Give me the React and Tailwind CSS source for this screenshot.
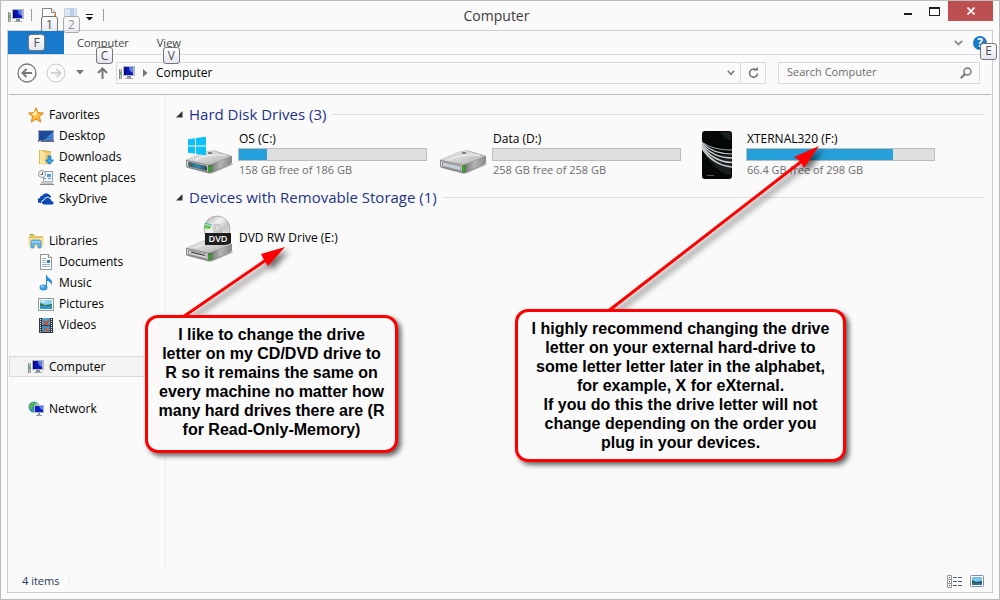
import { useState } from "react";

const sidebarGroups = [
  {
    name: "Favorites",
    icon: StarIcon,
    items: [
      { name: "Desktop", icon: DesktopIcon },
      { name: "Downloads", icon: DownloadsIcon },
      { name: "Recent places", icon: RecentIcon },
      { name: "SkyDrive", icon: CloudIcon },
    ],
  },
  {
    name: "Libraries",
    icon: LibrariesIcon,
    items: [
      { name: "Documents", icon: DocumentIcon },
      { name: "Music", icon: MusicIcon },
      { name: "Pictures", icon: PictureIcon },
      { name: "Videos", icon: VideoIcon },
    ],
  },
  { name: "Computer", icon: ComputerIcon, items: [], active: true },
  { name: "Network", icon: NetworkIcon, items: [] },
];

const drives = [
  { name: "OS (C:)", free: "158 GB free of 186 GB", used: 15, icon: OsDriveIcon },
  { name: "Data (D:)", free: "258 GB free of 258 GB", used: 0, icon: DriveIcon },
  { name: "XTERNAL320 (F:)", free: "66.4 GB free of 298 GB", used: 78, icon: ExternalIcon },
];

/* ---------- icons ---------- */

function ComputerIcon() {
  return (
    <svg width="16" height="16" viewBox="0 0 16 16" className="shrink-0">
      <rect x="0" y="4" width="3" height="10" fill="#c4c8c4" />
      <rect x="0" y="4" width="1" height="10" fill="#858a85" />
      <rect x="2" y="5" width="1" height="9" fill="#9ba09b" />
      <rect x="1" y="7" width="1" height="3" fill="#4fbf3f" />
      <rect x="4" y="1" width="12" height="10" fill="#b4b8c2" />
      <rect x="5" y="2" width="9" height="8" fill="#0a16b4" />
      <path d="M10 2h4v6c-3-1-4-3-4-6z" fill="#5f7fe6" />
      <path d="M5 2h2v8H5z" fill="#060b8a" />
      <rect x="8" y="11" width="4" height="2" fill="#8d9097" />
      <rect x="6" y="13" width="8" height="1" fill="#a2a5ab" />
    </svg>
  );
}

function NetworkIcon() {
  return (
    <svg width="16" height="16" viewBox="0 0 16 16" className="shrink-0">
      <circle cx="6" cy="6" r="5.5" fill="#2f86d8" />
      <path d="M1 5c1-3 3-4 5-4l1 2-2 2-1 3-2 1z" fill="#58b846" />
      <path d="M8 1l3 3-2 1-2-1z" fill="#9fdc7a" />
      <path d="M4 9l3-1v3l-2 0z" fill="#46a83b" />
      <rect x="6" y="4" width="10" height="8" fill="#a9b6d0" />
      <rect x="7" y="5" width="8" height="6" fill="#0d1fb8" />
      <path d="M11 5h4v4c-2 0-3-2-4-4z" fill="#5b80e8" />
      <rect x="10" y="12" width="2" height="2" fill="#8b95a8" />
      <rect x="8" y="14" width="6" height="1" fill="#8b95a8" />
    </svg>
  );
}

function StarIcon() {
  return (
    <svg width="16" height="16" viewBox="0 0 16 16" className="shrink-0">
      <path d="M8 .8l2.100 4.800 5.400.5-4.100 3.600 1.300 5.300L8 12.200 3.300 15l1.300-5.300L.5 6.100l5.400-.5z" fill="#fcb83a" stroke="#e0821e" strokeLinejoin="round" />
      <path d="M8 3l1.200 3.500L8 9 4 7.200z" fill="#fff0a8" />
    </svg>
  );
}

function DesktopIcon() {
  return (
    <svg width="16" height="16" viewBox="0 0 16 16" className="shrink-0">
      <rect x="0" y="2" width="16" height="12" fill="#a5adba" />
      <rect x="1" y="3" width="14" height="9" fill="#1c4b9e" />
      <path d="M6 12L15 4v8z" fill="#3f80d0" />
      <rect x="0" y="12" width="16" height="2" fill="#5c6d88" />
      <rect x="1" y="13" width="2" height="1" fill="#c3e0f5" />
    </svg>
  );
}

function DownloadsIcon() {
  return (
    <svg width="16" height="16" viewBox="0 0 16 16" className="shrink-0">
      <path d="M1 1h7l1 1h4v13H1z" fill="#dfb95c" />
      <path d="M2 1l5 2v13l-5-1z" fill="#f8e3a0" />
      <path d="M7 3h6v11H7z" fill="#eecb75" />
      <path d="M10 7h3v4h2.500l-4 4.500-4-4.500H10z" fill="#38a5e8" stroke="#1a6fb4" strokeWidth=".8" />
    </svg>
  );
}

function RecentIcon() {
  return (
    <svg width="16" height="16" viewBox="0 0 16 16" className="shrink-0">
      <rect x="5.500" y="1.500" width="9" height="10" fill="#f3f6f9" stroke="#9aa2ab" />
      <rect x="9" y="4" width="4" height="3" fill="#4a9fe0" />
      <path d="M6 8.500h2M10 8.500h3" stroke="#4a8fd0" />
      <path d="M4 11h10l2 4H2z" fill="#c0c4c8" />
      <rect x="2" y="14" width="14" height="1" fill="#878c92" />
      <circle cx="4" cy="4" r="3.500" fill="#fafafa" stroke="#8e959c" />
      <path d="M4.500 2v2.500H2.500" stroke="#4f5963" fill="none" />
    </svg>
  );
}

function CloudIcon() {
  return (
    <svg width="16" height="16" viewBox="0 0 16 16" className="shrink-0">
      <path d="M2 12a2.500 2.500 0 0 1 0-5 2.500 2.500 0 0 1 2.500-2.500A4 4 0 0 1 11.500 4c1 .5 1.500 1 1.500 2L5 12z" fill="#0b4bb3" />
      <path d="M6 14a2.500 2.500 0 0 1 0-5 3.500 3.500 0 0 1 6.500-1 2.500 2.500 0 0 1 1.500 2 2 2 0 0 1 0 4z" fill="#0b4bb3" stroke="#fafafa" strokeWidth=".9" />
    </svg>
  );
}

function LibrariesIcon() {
  return (
    <svg width="16" height="16" viewBox="0 0 16 16" className="shrink-0">
      <path d="M1 3l1-2h4l1 2h8v11H1z" fill="#e6c266" />
      <rect x="2" y="1" width="3" height="1" fill="#5dbd47" />
      <path d="M0 5h16l-1 9H1z" fill="#f7df97" />
      <path d="M3 15V9q0-2 2-2h6q2 0 2 2v6h-3v-4H6v4z" fill="#5bb5e9" stroke="#3d8fc9" strokeWidth=".7" />
      <path d="M4 9h8" stroke="#c4e8fb" />
    </svg>
  );
}

function DocumentIcon() {
  return (
    <svg width="16" height="16" viewBox="0 0 16 16" className="shrink-0">
      <path d="M2.500.5h8l3 3v12h-11z" fill="#fff" stroke="#8e959d" />
      <path d="M10.500.5v3h3" fill="#dfe4e8" stroke="#8e959d" />
      <path d="M4 4.500h4M4 6.500h4M4 8.500h4M4 10.500h8M4 12.500h8" stroke="#9bb4cf" />
      <rect x="9" y="6" width="3" height="3" fill="#2d78bd" />
    </svg>
  );
}

function MusicIcon() {
  return (
    <svg width="16" height="16" viewBox="0 0 16 16" className="shrink-0">
      <path d="M8 0h1c0 3 5 4 5 7 0 1 0 2-1 3 0-3-2-4-4-4v6H8z" fill="#2b8bd9" />
      <ellipse cx="5.500" cy="12.500" rx="4" ry="3" fill="#3596e0" />
      <ellipse cx="4.500" cy="11.500" rx="2" ry="1" fill="#8fcbf5" />
    </svg>
  );
}

function PictureIcon() {
  return (
    <svg width="16" height="16" viewBox="0 0 16 16" className="shrink-0">
      <rect x=".5" y="2.500" width="15" height="12" fill="#fff" stroke="#8f979f" />
      <rect x="2" y="4" width="12" height="9" fill="#8fd0f2" />
      <path d="M2 7l5 2 7-1v2H2z" fill="#2e7a54" />
      <rect x="2" y="10" width="12" height="3" fill="#2f95c8" />
      <path d="M3 5h5v1H3z" fill="#e5f6fd" />
    </svg>
  );
}

function VideoIcon() {
  return (
    <svg width="16" height="16" viewBox="0 0 16 16" className="shrink-0">
      <rect x="1" y="1" width="14" height="15" fill="#2f3a42" />
      <rect x="4" y="1" width="8" height="7" fill="#4e9fcc" />
      <rect x="4" y="9" width="8" height="6" fill="#3f8fc0" />
      <path d="M5 3l3 2 3-3v4l-2 2H6z" fill="#b8553f" />
      <path d="M5 11l3 1 3-2v4l-3 1z" fill="#c4614a" />
      <path d="M2.500 2v13M13.500 2v13" stroke="#e8eef2" strokeDasharray="1 1" />
    </svg>
  );
}

// the drive case, shared by every disk icon
function DriveBody({ face }) {
  return (
    <g>
      <path d="M4 42l22 6 22-9 0-2-22 9z" fill="#000" opacity=".15" />
      <path d="M1 34L22 25l7-.5L47 30v6q0 2-2 3L27 47q-2 .8-4 .3L3 42q-2-.6-2-2z" fill="#8f8f8f" />
      <path d="M1.500 34L22 25.300l7-.3L46 30.300 24 39z" fill="url(#driveTop)" />
      <path d="M24.500 39L46.500 30.500V36q0 1.500-1.500 2.200L26.500 46z" fill="url(#driveSide)" />
      <path d="M1.500 34.500L24 39.200l1 7.300L3 41q-1.500-.5-1.500-2z" fill="#dcdcdc" stroke="#777" strokeWidth=".7" />
      <path d="M3.500 36L22 40.200v4.600L4.500 40.500q-1-.2-1-1z" fill={face} stroke="#555" strokeWidth=".5" />
      <path d="M10 34q14-7 31-4.500" fill="none" stroke="#fff" opacity=".7" />
      <ellipse cx="25" cy="27" rx="2.500" ry="1" fill="#777" />
      <rect x="23.500" y="40" width="2.500" height="5.500" fill="#34c420" stroke="#1c5c12" strokeWidth=".6" />
    </g>
  );
}

function DriveDefs() {
  return (
    <svg width="0" height="0" className="absolute" aria-hidden="true">
      <defs>
        <linearGradient id="driveTop" x1="0" y1="0" x2="1" y2="1">
          <stop offset="0" stopColor="#ededed" />
          <stop offset=".5" stopColor="#d2d2d2" />
          <stop offset="1" stopColor="#a9a9a9" />
        </linearGradient>
        <linearGradient id="driveSide" x1="0" y1="0" x2="1" y2="0">
          <stop offset="0" stopColor="#6d6d6d" />
          <stop offset=".5" stopColor="#b5b5b5" />
          <stop offset="1" stopColor="#8a8a8a" />
        </linearGradient>
        <linearGradient id="driveTeal" x1="0" y1="0" x2="1" y2="0">
          <stop offset="0" stopColor="#3d5363" />
          <stop offset=".5" stopColor="#2d8fb0" />
          <stop offset="1" stopColor="#2b4a5c" />
        </linearGradient>
        <linearGradient id="disc" x1="0" y1="0" x2="1" y2="1">
          <stop offset="0" stopColor="#a8a8a8" />
          <stop offset=".4" stopColor="#f4f4f4" />
          <stop offset=".6" stopColor="#c4c4c4" />
          <stop offset="1" stopColor="#ececec" />
        </linearGradient>
      </defs>
    </svg>
  );
}

function DriveIcon() {
  return (
    <svg width="48" height="48" viewBox="0 5 48 48" className="shrink-0">
      <DriveBody face="#c6cdd6" />
    </svg>
  );
}

function OsDriveIcon() {
  return (
    <svg width="48" height="48" viewBox="0 5 48 48" className="shrink-0">
      <DriveBody face="url(#driveTeal)" />
      <path d="M3 13.200l7-1v7.300H3zM11 12l10-1.300v8.800H11zM3 20.500h7v7.300l-7-1zM11 20.500h10v8.700l-10-1.300z" fill="#0cc0fb" />
    </svg>
  );
}

function DvdDriveIcon() {
  return (
    <svg width="48" height="48" viewBox="0 0 48 48" className="shrink-0">
      <DriveBody face="#d5d5d5" />
      <path d="M6 38l14 3.500" stroke="#333" strokeWidth="1.200" />
      <circle cx="32" cy="15" r="13" fill="url(#disc)" stroke="#8c8c8c" strokeWidth=".6" />
      <path d="M20 11l6 1-1 3-6-1z" fill="#5fd03c" />
      <path d="M20 9l7 2" stroke="#3fb4d8" />
      <path d="M38 17l6 2-2 3-5-2z" fill="#efe3ae" />
      <circle cx="32" cy="14" r="4" fill="#d8d8d8" stroke="#aaa" strokeWidth=".6" />
      <circle cx="32" cy="14" r="1.500" fill="#fafafa" stroke="#999" strokeWidth=".5" />
      <path d="M20 19h26v10q-3 2-7 2H20z" fill="#1d1d1d" />
      <text x="33" y="28" textAnchor="middle" fontSize="9" fontWeight="600" fill="#fff" fontFamily="'Open Sans', sans-serif">
        DVD
      </text>
    </svg>
  );
}

function ExternalIcon() {
  return (
    <svg width="48" height="48" viewBox="0 0 48 48" className="shrink-0">
      <rect x="9" y="0" width="30" height="48" rx="3" fill="#060808" />
      <path d="M27 1c4 6 8 8 11 8V3q0-2-2-2zM14 24c4 10 12 18 24 20V24z" fill="#24292b" opacity=".7" />
      <g fill="none" stroke="#cdd2d4">
        <path d="M9 11c8 6 18 8 30 8" strokeWidth=".8" />
        <path d="M9 12c8 8 18 11 30 11" strokeWidth="1.100" />
        <path d="M9 13.500c8 9 18 13.500 30 13.500" strokeWidth="1.300" />
        <path d="M9 15c7 10 18 16 30 16.500" strokeWidth="1.500" />
        <path d="M9 17c6 10 17 18 30 19" strokeWidth="1.700" />
      </g>
      <rect x="14" y="44" width="7" height="1" fill="#555" />
    </svg>
  );
}

/* ---------- shared bits ---------- */

function KeyTip({ children, className = "" }) {
  return (
    <kbd
      className={`absolute flex h-[17px] w-[17px] items-center justify-center rounded-[3px] border border-[#767676] bg-[linear-gradient(#ffffff,#e4e6f1)] font-[inherit] text-[12px] leading-none text-[#4c4c4c] ${className}`}
    >
      {children}
    </kbd>
  );
}

function GroupHeader({ title }) {
  return (
    <h2 className="flex h-5 items-center text-[15px] leading-5 text-[#1e3287]">
      <svg width="7" height="7" viewBox="0 0 7 7" className="mr-[6px]">
        <path d="M6.500 0v6.500H0z" fill="#333" />
      </svg>
      {title}
      <span className="ml-[6px] h-px flex-1 bg-[#dedede]" />
    </h2>
  );
}

function Drive({ drive }) {
  const Icon = drive.icon;
  return (
    <li className="flex h-12 gap-[5px]">
      <Icon />
      <div className="flex-1">
        <p className="pl-px leading-4 text-black">{drive.name}</p>
        <div className="mt-px h-[13px] border border-[#bcbcbc] bg-[#dfdfdf]">
          <div className="h-full bg-[#26a0da]" style={{ width: `${drive.used}%` }} />
        </div>
        <p className="mt-px pl-px text-[11px] leading-4 text-[#6d6d6d]">{drive.free}</p>
      </div>
    </li>
  );
}

/* ---------- window parts ---------- */

function TitleBar() {
  return (
    <header className="grid h-[29px] grid-cols-[1fr_auto_1fr] pr-[6px] pl-[7px]">
      <div className="flex items-start pt-[7px]">
        <ComputerIcon />
        <span className="ml-[7px] mt-px h-3 w-px bg-[#9d9d9d]" />
        <button aria-label="Properties" className="relative ml-[9px] h-4 w-4">
          <svg width="16" height="16" viewBox="0 0 16 16">
            <path d="M1.500.5h9l4 4v11h-13z" fill="#fff" stroke="#868686" />
            <path d="M10.500.5v4h4" fill="#eee" stroke="#868686" />
            <path d="M13 6l2 1v2h-2z" fill="#e08a3a" />
          </svg>
          <KeyTip className="left-0 top-2">1</KeyTip>
        </button>
        <button aria-label="New folder" className="relative ml-[6px] h-4 w-4 opacity-60">
          <svg width="16" height="16" viewBox="0 0 16 16">
            <path d="M1.500.5h12v14h-12z" fill="#c8dcf2" stroke="#a3bbd6" />
            <path d="M7 1h4v8H7z" fill="#8fb2dc" />
          </svg>
          <KeyTip className="left-0 top-2">2</KeyTip>
        </button>
        <button aria-label="Customize Quick Access Toolbar" className="ml-[7px] mt-[6px]">
          <svg width="8" height="8" viewBox="0 0 8 8">
            <path d="M0 0h7v1H0zM0 3h7L3.500 6.500z" fill="#111" />
          </svg>
        </button>
        <span className="ml-[9px] mt-px h-3 w-px bg-[#9d9d9d]" />
      </div>
      <h1 className="pt-[5px] pr-2 text-[14px] leading-5 text-[#3c3c3c]">Computer</h1>
      <div className="flex items-start justify-end">
        <button aria-label="Minimize" className="flex h-5 w-[27px] items-end justify-center pb-[6px]">
          <span className="h-[2px] w-2 bg-[#1e1e1e]" />
        </button>
        <button aria-label="Maximize" className="flex h-5 w-[27px] items-center justify-center">
          <span className="h-[9px] w-[11px] border border-t-2 border-[#1e1e1e]" />
        </button>
        <button aria-label="Close" className="flex h-5 w-[45px] items-center justify-center bg-[#be4f50]">
          <svg width="8" height="8" viewBox="0 0 8 8">
            <path d="M.5.5l7 7M7.500.5l-7 7" stroke="#fff" strokeWidth="1.600" />
          </svg>
        </button>
      </div>
    </header>
  );
}

function Ribbon() {
  return (
    <nav className="flex h-6 items-stretch border-b border-[#dadbdc] text-[11px] text-[#444]">
      <button className="relative w-14 bg-[#1979ca] text-white">
        File
        <KeyTip className="left-5 top-[3px]">F</KeyTip>
      </button>
      <button className="relative ml-[13px] pt-[2px]">
        Computer
        <KeyTip className="left-[19px] top-4">C</KeyTip>
      </button>
      <button className="relative ml-7 pt-[2px]">
        View
        <KeyTip className="left-[6px] top-4">V</KeyTip>
      </button>
      <div className="ml-auto flex items-center gap-[10px] pr-[5px]">
        <button aria-label="Expand the Ribbon">
          <svg width="9" height="6" viewBox="0 0 9 6">
            <path d="M.8.8l3.700 3.700L8.200.8" fill="none" stroke="#8a8a8a" strokeWidth="1.800" />
          </svg>
        </button>
        <button aria-label="Help" className="relative h-[14px] w-[14px] rounded-full bg-[#1979ca] text-[12px] font-bold leading-[14px] text-white">
          ?
          <KeyTip className="left-[7px] top-[7px] font-normal">E</KeyTip>
        </button>
      </div>
    </nav>
  );
}

function AddressBar() {
  const [query, setQuery] = useState("");

  return (
    <div className="mr-px ml-px flex h-10 items-center border-b border-[#b9b9b9] pr-[11px] pb-1 pl-2">
      <button aria-label="Back">
        <svg width="20" height="20" viewBox="0 0 20 20" fill="none" stroke="#787878">
          <circle cx="10" cy="10" r="9" strokeWidth="1.300" />
          <path d="M15 10H6M9.500 6L5.500 10l4 4" strokeWidth="2" />
        </svg>
      </button>
      <button aria-label="Forward" className="ml-[9px]" disabled>
        <svg width="20" height="20" viewBox="0 0 20 20" fill="none" stroke="#c8c8c8">
          <circle cx="10" cy="10" r="9" />
          <path d="M5 10h9M10.500 6l4 4-4 4" strokeWidth="1.600" />
        </svg>
      </button>
      <button aria-label="Recent locations" className="ml-[10px]">
        <svg width="8" height="5" viewBox="0 0 8 5">
          <path d="M0 0h8L4 4.500z" fill="#777" />
        </svg>
      </button>
      <button aria-label="Up" className="ml-[13px]">
        <svg width="11" height="12" viewBox="0 0 11 12" fill="none" stroke="#777" strokeWidth="2">
          <path d="M5.500 12V2M1 6l4.500-4.500L10 6" />
        </svg>
      </button>
      <div className="ml-2 flex h-[22px] flex-1 items-center border border-[#d9d9d9] pl-[2px]">
        <ComputerIcon />
        <svg width="5" height="8" viewBox="0 0 5 8" className="ml-2">
          <path d="M0 0v8l4.500-4z" fill="#777" />
        </svg>
        <a href="#computer" className="ml-2 text-black">
          Computer
        </a>
        <button aria-label="Previous locations" className="mr-[5px] ml-auto">
          <svg width="8" height="6" viewBox="0 0 8 6">
            <path d="M.8.8L4 4.300 7.200.8" fill="none" stroke="#777" strokeWidth="1.600" />
          </svg>
        </button>
        <button aria-label="Refresh" className="flex h-full w-[25px] items-center justify-center border-l border-[#d9d9d9]">
          <svg width="11" height="12" viewBox="0 0 11 12">
            <path d="M8 3A4 4 0 1 0 9.500 6.500" fill="none" stroke="#777" strokeWidth="1.600" />
            <path d="M5.500 3.500H10V0z" fill="#777" />
          </svg>
        </button>
      </div>
      <label className="ml-3 flex h-[22px] w-[202px] items-center border border-[#d9d9d9] pr-[7px] pl-2">
        <input
          aria-label="Search Computer"
          placeholder="Search Computer"
          value={query}
          onChange={(e) => setQuery(e.target.value)}
          className="min-w-0 flex-1 bg-transparent text-[11px] outline-none placeholder:text-[#6d6d6d]"
        />
        <svg width="12" height="12" viewBox="0 0 12 12" fill="none" stroke="#777">
          <circle cx="7.500" cy="4.500" r="3.500" strokeWidth="1.500" />
          <path d="M5 7L.8 11.200" strokeWidth="2" />
        </svg>
      </label>
    </div>
  );
}

function Sidebar() {
  return (
    <aside className="w-[158px] shrink-0 border-r border-[#f0f0f0] pt-[9px] pl-px text-black">
      {sidebarGroups.map((group) => (
        <div key={group.name} className="mb-[21px]">
          <a
            href="#item"
            className={`flex h-[21px] items-center gap-[5px] border pl-[18px] ${
              group.active ? "border-[#dadada] bg-[#f3f3f3]" : "border-transparent"
            }`}
          >
            <group.icon />
            {group.name}
          </a>
          {group.items.map((item) => (
            <a key={item.name} href="#item" className="flex h-[21px] items-center gap-[5px] pl-[29px]">
              <item.icon />
              {item.name}
            </a>
          ))}
        </div>
      ))}
    </aside>
  );
}

function StatusBar() {
  return (
    <footer className="flex h-[22px] items-center pr-2 pl-[14px] text-[11px] text-[#1e395b]">
      <span>4 items</span>
      <span className="ml-[10px] h-3 w-px bg-[#ececec]" />
      <button aria-label="Details view" className="ml-auto">
        <svg width="16" height="13" viewBox="0 0 16 13">
          <path d="M.5.5h4v4h-4zM.5 4.500h4v4h-4zM.5 8.500h4v4h-4z" fill="#fff" stroke="#999" />
          <path d="M2 2h1v1H2zM2 6h1v1H2zM2 10h1v1H2z" fill="#444" />
          <path d="M6 2.500h4M11 2.500h4M6 6.500h4M11 6.500h4M6 10.500h4M11 10.500h4" stroke="#4d5b75" />
        </svg>
      </button>
      <button aria-label="Large icons view" className="ml-[7px]">
        <svg width="14" height="12" viewBox="0 0 14 12">
          <rect x=".5" y=".5" width="13" height="11" rx="1" fill="#fff" stroke="#7e90b8" />
          <rect x="2" y="2" width="10" height="8" fill="#7cc4ec" />
          <path d="M2 5l4 2 6-1v2H2z" fill="#21584a" />
          <rect x="2" y="8" width="10" height="2" fill="#2c6fa6" />
        </svg>
      </button>
    </footer>
  );
}

function Arrow({ line, head }) {
  return (
    <g className="drop-shadow-[4px_4px_3px_rgba(0,0,0,0.6)]">
      <path d={line} stroke="#f00" strokeWidth="3" />
      <path d={head} fill="#f00" />
    </g>
  );
}

const calloutClass =
  "absolute rounded-[13px] border-[3px] border-[#f00] bg-[#fafafa] text-center font-['Liberation_Sans',Arial,sans-serif] text-[16px] leading-[19px] font-bold text-black shadow-[3px_3px_5px_rgba(0,0,0,0.6)]";

// notes pinned over the window
function Annotations() {
  return (
    <div className="pointer-events-none absolute top-0 left-0">
      <svg width="900" height="330" viewBox="0 0 900 330" className="absolute max-w-none">
        <Arrow line="M179 318L265 259" head="M284 246L260 253l3 6 4 6z" />
        <Arrow line="M606 311L801 160" head="M818 145L793 156l6 4 4 7z" />
      </svg>
      <p className={`${calloutClass} top-[314px] left-[144px] w-[253px] pt-[7px] pb-[11px]`}>
        I like to change the drive
        <br />
        letter on my CD/DVD drive to
        <br />
        R so it remains the same on
        <br />
        every machine no matter how
        <br />
        many hard drives there are (R
        <br />
        for Read-Only-Memory)
      </p>
      <p className={`${calloutClass} top-[308px] left-[514px] w-[331px] py-[7px]`}>
        I highly recommend changing the drive
        <br />
        letter on your external hard-drive to
        <br />
        some letter letter later in the alphabet,
        <br />
        for example, X for eXternal.
        <br />
        If you do this the drive letter will not
        <br />
        change depending on the order you
        <br />
        plug in your devices.
      </p>
    </div>
  );
}

export default function App() {
  return (
    <div className="relative flex min-h-screen flex-col border border-[#bdbdbd] bg-[#fafafa] font-['Open_Sans','Noto_Sans',sans-serif] text-[12px]">
      <DriveDefs />
      <TitleBar />
      <div className="mx-[6px] mb-[6px] flex flex-1 flex-col border border-[#cccccc]">
        <Ribbon />
        <AddressBar />
        <div className="flex flex-1">
          <Sidebar />
          <main className="flex-1 pt-[9px] pr-[7px] pl-[10px]">
            <GroupHeader title="Hard Disk Drives (3)" />
            <ul className="mt-[7px] mb-2 grid grid-cols-[repeat(auto-fill,242px)] gap-x-3 pl-[9px]">
              {drives.map((drive) => (
                <Drive key={drive.name} drive={drive} />
              ))}
            </ul>
            <GroupHeader title="Devices with Removable Storage (1)" />
            <div className="mt-[7px] flex h-12 items-center gap-[6px] pl-[9px] text-black">
              <DvdDriveIcon />
              DVD RW Drive (E:)
            </div>
          </main>
        </div>
        <StatusBar />
      </div>
      <Annotations />
    </div>
  );
}
